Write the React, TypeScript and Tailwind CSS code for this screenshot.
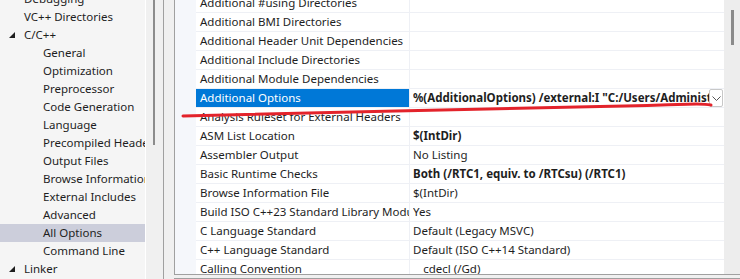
import React from "react"

type TreeItem = { label: string; level: number; expanded?: boolean; selected?: boolean }

const tree: TreeItem[] = [
    { label: "Debugging", level: 1 },
    { label: "VC++ Directories", level: 1 },
    { label: "C/C++", level: 1, expanded: true },
    { label: "General", level: 2 },
    { label: "Optimization", level: 2 },
    { label: "Preprocessor", level: 2 },
    { label: "Code Generation", level: 2 },
    { label: "Language", level: 2 },
    { label: "Precompiled Headers", level: 2 },
    { label: "Output Files", level: 2 },
    { label: "Browse Information", level: 2 },
    { label: "External Includes", level: 2 },
    { label: "Advanced", level: 2 },
    { label: "All Options", level: 2, selected: true },
    { label: "Command Line", level: 2 },
    { label: "Linker", level: 1, expanded: true },
]

type Prop = { name: string; value?: string; bold?: boolean; selected?: boolean }

const props: Prop[] = [
    { name: "Additional #using Directories" },
    { name: "Additional BMI Directories" },
    { name: "Additional Header Unit Dependencies" },
    { name: "Additional Include Directories" },
    { name: "Additional Module Dependencies" },
    { name: "Additional Options", value: '%(AdditionalOptions) /external:I "C:/Users/Administrator/source/repos"', bold: true, selected: true },
    { name: "Analysis Ruleset for External Headers" },
    { name: "ASM List Location", value: "$(IntDir)", bold: true },
    { name: "Assembler Output", value: "No Listing" },
    { name: "Basic Runtime Checks", value: "Both (/RTC1, equiv. to /RTCsu) (/RTC1)", bold: true },
    { name: "Browse Information File", value: "$(IntDir)" },
    { name: "Build ISO C++23 Standard Library Modules", value: "Yes" },
    { name: "C Language Standard", value: "Default (Legacy MSVC)" },
    { name: "C++ Language Standard", value: "Default (ISO C++14 Standard)" },
    { name: "Calling Convention", value: "__cdecl (/Gd)" },
]

function Triangle() {
    return (
        <svg width="6" height="6" viewBox="0 0 6 6" className="shrink-0">
            <path d="M6 0 L6 6 L0 6 Z" fill="#1e1e1e" />
        </svg>
    )
}

function Tree() {
    return (
        <div className="w-[146px] shrink-0 bg-[#f5f5f5] overflow-hidden border-r border-white">
            <div className="-mt-[10px]">
                {tree.map((t) => (
                    <div
                        key={t.label}
                        className={
                            "h-[18px] flex items-center whitespace-nowrap overflow-hidden " +
                            (t.selected ? "bg-[#cccedb]" : "")
                        }
                    >
                        {t.level === 1 ? (
                            <div className="flex items-center">
                                <div className="w-[24px] flex justify-end pr-[9px]">
                                    {t.expanded && <Triangle />}
                                </div>
                                <span>{t.label}</span>
                            </div>
                        ) : (
                            <span className="pl-[43px]">{t.label}</span>
                        )}
                    </div>
                ))}
            </div>
        </div>
    )
}

function Chevron() {
    return (
        <svg width="9" height="5" viewBox="0 0 9 5">
            <path d="M0.5 0.5 L4.5 4.5 L8.5 0.5" fill="none" stroke="#555" strokeWidth="1" />
        </svg>
    )
}

function Grid() {
    return (
        <div className="flex-1 flex min-w-0">
            <div className="w-[21px] shrink-0 bg-[#f5f7fb]" />
            <div className="flex-1 min-w-0 bg-white overflow-hidden">
                <div className="-mt-[6px]">
                    {props.map((p) => (
                        <div key={p.name} className="h-[19px] flex border-b border-[#eef0f5]">
                            <div
                                className={
                                    "w-[213px] shrink-0 pl-[4px] flex items-center whitespace-nowrap overflow-hidden " +
                                    (p.selected ? "bg-[#0078d7] text-white" : "")
                                }
                            >
                                {p.name}
                            </div>
                            <div className="w-px shrink-0 bg-[#eef0f5]" />
                            <div className="flex-1 min-w-0 flex items-center pl-[3px]">
                                <span
                                    className={
                                        "flex-1 min-w-0 whitespace-nowrap overflow-hidden " +
                                        (p.bold ? "font-bold" : "")
                                    }
                                >
                                    {p.value}
                                </span>
                                {p.selected && (
                                    <div className="w-[14px] h-[18px] mr-[1px] shrink-0 border border-[#c8c8c8] rounded-[2px] bg-white flex items-center justify-center">
                                        <Chevron />
                                    </div>
                                )}
                            </div>
                        </div>
                    ))}
                </div>
            </div>
            <div className="w-[16px] shrink-0 bg-[#ededed] pt-[10px] pl-[7px]">
                <div className="w-[3px] h-[35px] bg-[#8a8a8a]" />
            </div>
        </div>
    )
}

export default function App() {
    return (
        <div
            className="relative w-[740px] h-[279px] overflow-hidden flex bg-[#f0f0f0] text-[11.5px] text-[#1e1e1e]"
            style={{ fontFamily: '"Noto Sans", "Open Sans", sans-serif' }}
        >
            <Tree />
            <div className="w-[17px] shrink-0 pl-[7px]">
                <div className="w-[2px] h-[145px] bg-[#8c8c8c]" />
            </div>
            <div className="w-px shrink-0 bg-[#a0a0a0]" />
            <div className="w-[10px] shrink-0" />
            <div className="flex-1 min-w-0 flex flex-col">
                <div className="h-[275px] flex border-l border-b border-[#a0a0a0]">
                    <Grid />
                </div>
                <div className="h-[3px]" />
                <div className="h-px bg-[#a0a0a0]" />
            </div>
            <svg className="absolute inset-0 pointer-events-none" width="740" height="279">
                <path
                    d="M183 116 C 300 113, 480 109, 600 106.5 S 690 103, 711 105"
                    fill="none"
                    stroke="#e3232b"
                    strokeWidth="3"
                    strokeLinecap="round"
                />
            </svg>
        </div>
    )
}
